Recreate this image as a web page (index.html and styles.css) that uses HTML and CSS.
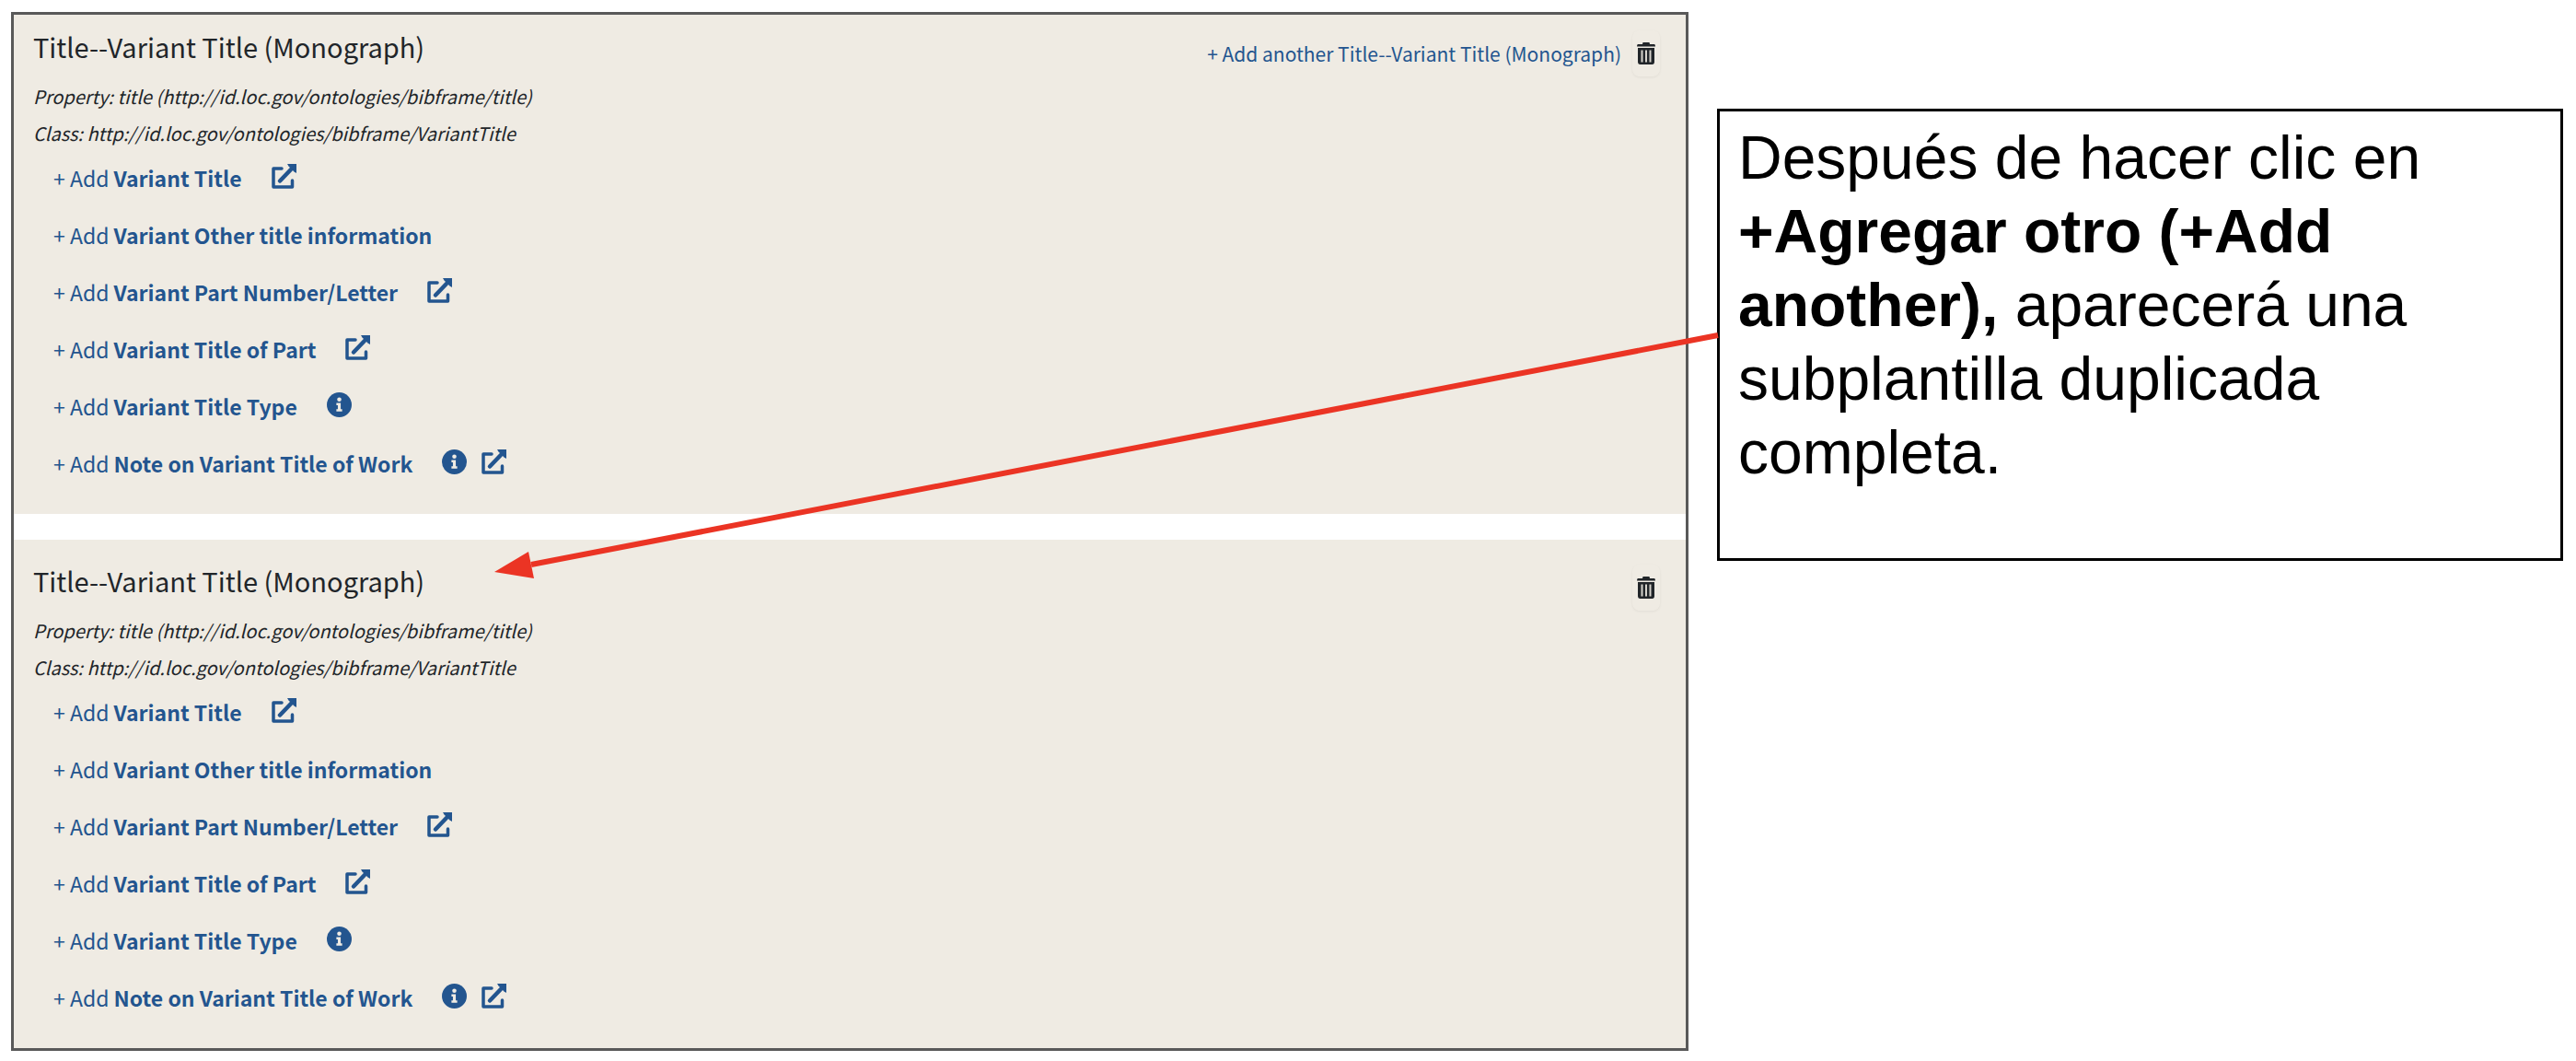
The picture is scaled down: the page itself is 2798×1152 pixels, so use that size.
FILE: index.html
```html
<!DOCTYPE html>
<html lang="es">
<head>
<meta charset="utf-8">
<title>Title--Variant Title (Monograph)</title>
<link rel="stylesheet" href="styles.css">
</head>
<body>
<svg class="sprite" aria-hidden="true">
  <symbol id="external" viewBox="0 0 27 27">
    <path d="M11 5H2V25H22.500V18" fill="none" stroke="currentColor" stroke-width="3.500" stroke-linejoin="round" stroke-linecap="round"/>
    <path d="M9 18.500L21 6" fill="none" stroke="currentColor" stroke-width="4.500" stroke-linecap="round"/>
    <path d="M17 0H27V10L24.500 8.500L18.500 2.500Z" fill="currentColor"/>
  </symbol>
  <symbol id="info" viewBox="0 0 26 26">
    <circle cx="13" cy="13" r="13" fill="currentColor"/>
    <circle cx="13" cy="7.500" r="2.200" fill="#efebe3"/>
    <path d="M10 11H14.500V17.500H16V20H10V17.500H11.500V13.500H10Z" fill="#efebe3"/>
  </symbol>
  <symbol id="trash" viewBox="0 0 20 24">
    <path d="M6.500 0H13.500L14 2H19Q20 2 20 4.500H0Q0 2 1 2H6Z" fill="currentColor"/>
    <path d="M1 6H19V21Q19 24 16.500 24H3.500Q1 24 1 21Z" fill="currentColor"/>
    <path d="M5.500 8.500V21.500M10 8.500V21.500M14.500 8.500V21.500" stroke="#d6d3cc" stroke-width="2"/>
  </symbol>
</svg>
<main class="page">
  <div class="panel">
    <section class="template">
      <header class="head">
        <h2 class="title">Title--Variant Title (Monograph)</h2>
        <div class="actions">
          <button class="add another" type="button">+ Add another Title--Variant Title (Monograph)</button>
          <button class="trash" type="button" aria-label="Remove"><svg><use href="#trash"/></svg></button>
        </div>
      </header>
      <p class="meta">Property: title (http://id.loc.gov/ontologies/bibframe/title)</p>
      <p class="meta">Class: http://id.loc.gov/ontologies/bibframe/VariantTitle</p>
      <ul class="fields">
        <li class="field"><button class="add" type="button">+ Add <strong>Variant Title</strong></button><span class="icons"><a class="icon" href="#" aria-label="Open"><svg><use href="#external"/></svg></a></span></li>
        <li class="field"><button class="add" type="button">+ Add <strong>Variant Other title information</strong></button></li>
        <li class="field"><button class="add" type="button">+ Add <strong>Variant Part Number/Letter</strong></button><span class="icons"><a class="icon" href="#" aria-label="Open"><svg><use href="#external"/></svg></a></span></li>
        <li class="field"><button class="add" type="button">+ Add <strong>Variant Title of Part</strong></button><span class="icons"><a class="icon" href="#" aria-label="Open"><svg><use href="#external"/></svg></a></span></li>
        <li class="field"><button class="add" type="button">+ Add <strong>Variant Title Type</strong></button><span class="icons"><button class="icon" type="button" aria-label="Info"><svg><use href="#info"/></svg></button></span></li>
        <li class="field"><button class="add" type="button">+ Add <strong>Note on Variant Title of Work</strong></button><span class="icons"><button class="icon" type="button" aria-label="Info"><svg><use href="#info"/></svg></button><a class="icon" href="#" aria-label="Open"><svg><use href="#external"/></svg></a></span></li>
      </ul>
    </section>
    <section class="template copy">
      <header class="head">
        <h2 class="title">Title--Variant Title (Monograph)</h2>
        <div class="actions">
          <button class="trash" type="button" aria-label="Remove"><svg><use href="#trash"/></svg></button>
        </div>
      </header>
      <p class="meta">Property: title (http://id.loc.gov/ontologies/bibframe/title)</p>
      <p class="meta">Class: http://id.loc.gov/ontologies/bibframe/VariantTitle</p>
      <ul class="fields">
        <li class="field"><button class="add" type="button">+ Add <strong>Variant Title</strong></button><span class="icons"><a class="icon" href="#" aria-label="Open"><svg><use href="#external"/></svg></a></span></li>
        <li class="field"><button class="add" type="button">+ Add <strong>Variant Other title information</strong></button></li>
        <li class="field"><button class="add" type="button">+ Add <strong>Variant Part Number/Letter</strong></button><span class="icons"><a class="icon" href="#" aria-label="Open"><svg><use href="#external"/></svg></a></span></li>
        <li class="field"><button class="add" type="button">+ Add <strong>Variant Title of Part</strong></button><span class="icons"><a class="icon" href="#" aria-label="Open"><svg><use href="#external"/></svg></a></span></li>
        <li class="field"><button class="add" type="button">+ Add <strong>Variant Title Type</strong></button><span class="icons"><button class="icon" type="button" aria-label="Info"><svg><use href="#info"/></svg></button></span></li>
        <li class="field"><button class="add" type="button">+ Add <strong>Note on Variant Title of Work</strong></button><span class="icons"><button class="icon" type="button" aria-label="Info"><svg><use href="#info"/></svg></button><a class="icon" href="#" aria-label="Open"><svg><use href="#external"/></svg></a></span></li>
      </ul>
    </section>
  </div>
  <aside class="callout">
    <p>Después de hacer clic en <strong>+Agregar otro (+Add another),</strong> aparecerá una subplantilla duplicada completa.</p>
  </aside>
  <svg class="arrow" viewBox="0 0 2798 1152" aria-hidden="true">
    <path d="M1866 364L577 613" stroke="#eb3424" stroke-width="6"/>
    <path d="M537 621L574 599L580 628Z" fill="#eb3424"/>
  </svg>
</main>
</body>
</html>
```
FILE: styles.css
```css
* {
  box-sizing: border-box;
}

body {
  margin: 0;
  background: #fff;
  color: #212529;
  font-family: "Noto Sans CJK SC", "Noto Sans", sans-serif;
}

.sprite {
  display: none;
}

.page {
  position: relative;
  display: grid;
  grid-template-columns: 1822fr 919fr;
  gap: 31px;
  align-items: start;
  padding: 13px 14px 11px 12px;
}

.panel {
  display: flex;
  flex-direction: column;
  gap: 28px;
  border: 3px solid #595959;
}

.template {
  padding: 14px 28px 35px 21px;
  background: #efebe3;
}

.copy {
  padding-top: 24px;
}

.head {
  display: flex;
  justify-content: space-between;
  align-items: flex-start;
  margin-bottom: 2px;
}

.title {
  margin: 0;
  font-size: 29px;
  line-height: 40px;
  font-weight: 400;
}

.actions {
  display: flex;
  gap: 12px;
  padding-top: 3px;
}

button {
  padding: 0;
  border: 0;
  background: none;
  color: inherit;
  font: inherit;
}

.trash {
  display: flex;
  align-items: center;
  justify-content: center;
  width: 30px;
  height: 50px;
  border-radius: 8px;
  box-shadow: 0 1px 3px #0000000f;
}

.trash svg {
  width: 20px;
  height: 24px;
}

.meta {
  margin: 0;
  font-size: 20px;
  line-height: 40px;
  font-style: italic;
}

.fields {
  display: flex;
  flex-direction: column;
  gap: 22px;
  margin: 8px 0 0 22px;
  padding: 0;
  list-style: none;
}

.field {
  display: flex;
  gap: 32px;
}

.add {
  color: #23558f;
  font-size: 23px;
  line-height: 40px;
}

.another {
  font-size: 21px;
  line-height: 50px;
}

.add strong {
  font-weight: 700;
}

.icons {
  display: flex;
  gap: 16px;
  padding-top: 5px;
}

.icon {
  display: block;
  height: 27px;
  color: #23558f;
}

.icon svg {
  display: block;
  width: 27px;
  height: 27px;
}

.callout {
  margin-top: 105px;
  padding: 10px 20px 75px;
  border: 3px solid #000;
  color: #000;
  font-family: "Liberation Sans", Arial, sans-serif;
  font-size: 66px;
  line-height: 80px;
}

.callout p {
  margin: 0;
}

.arrow {
  position: absolute;
  top: 0;
  left: 0;
  width: 100%;
  pointer-events: none;
}
```
